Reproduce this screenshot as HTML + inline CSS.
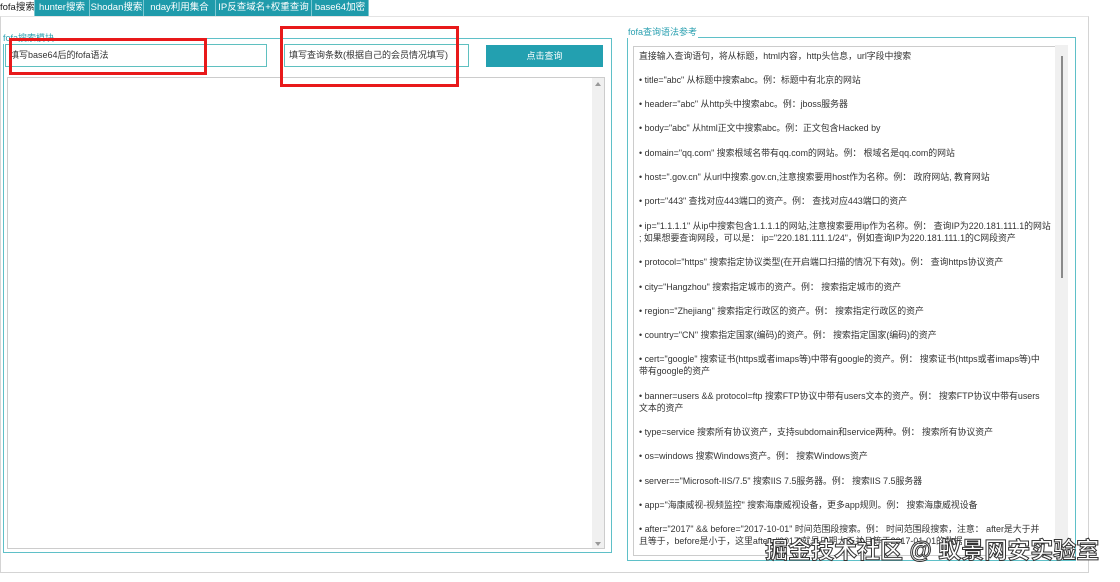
<!DOCTYPE html>
<html><head><meta charset="utf-8"><style>
*{margin:0;padding:0;box-sizing:border-box}
body{width:1120px;height:582px;background:#fff;font-family:"Liberation Sans","Noto Sans CJK SC",sans-serif;position:relative;overflow:hidden;color:#333}
.a{position:absolute}
.tab{position:absolute;top:0;height:16px;background:#1f9bab;color:#fff;font-size:9.5px;line-height:16px;text-align:center;border-right:1px solid #7cc8d2;white-space:nowrap;overflow:hidden}
.inp{position:absolute;border:1px solid #5fc0c0;background:#fff;font-size:9px;line-height:21px;padding-left:4px;color:#333;white-space:nowrap;overflow:hidden}
.p{position:absolute;left:639px;font-size:8.9px;line-height:12px;color:#333;width:415px;white-space:nowrap}
.leg{position:absolute;font-size:9px;color:#2aa0b0;background:#fff;padding:0 1px;line-height:12px}
</style></head><body>
<div class="a" style="left:0;top:16px;width:1089px;height:557px;border:1px solid #d4d4d4;border-top:1px solid #e4e4e4"></div>
<div class="tab" style="left:0;width:35px;background:#fff;color:#222;text-align:left">fofa搜索</div>
<div class="tab" style="left:35px;width:55px">hunter搜索</div>
<div class="tab" style="left:90px;width:54px">Shodan搜索</div>
<div class="tab" style="left:144px;width:72px">nday利用集合</div>
<div class="tab" style="left:216px;width:96px">IP反查域名+权重查询</div>
<div class="tab" style="left:312px;width:57px">base64加密</div>

<div class="a" style="left:3px;top:38px;width:609px;height:515px;border:1px solid #5fc0c8"></div>
<div class="leg" style="left:2px;top:32px">fofa搜索模块</div>
<div class="inp" style="left:5px;top:44px;width:262px;height:23px">填写base64后的fofa语法</div>
<div class="inp" style="left:284px;top:44px;width:185px;height:23px">填写查询条数(根据自己的会员情况填写)</div>
<div class="a" style="left:486px;top:45px;width:117px;height:22px;background:#23a0b0;color:#fff;font-size:9px;line-height:22px;text-align:center">点击查询</div>
<div class="a" style="left:7px;top:77px;width:598px;height:472px;border:1px solid #ccc;background:#fff"></div>
<div class="a" style="left:592px;top:78px;width:12px;height:470px;background:#f0f0f0"></div>
<div class="a" style="left:595px;top:82px;width:0;height:0;border:3px solid transparent;border-bottom:4px solid #999;border-top:0"></div>
<div class="a" style="left:595px;top:542px;width:0;height:0;border:3px solid transparent;border-top:4px solid #999;border-bottom:0"></div>
<div class="a" style="left:9px;top:38px;width:198px;height:37px;border:3px solid #e8191a"></div>
<div class="a" style="left:280px;top:26px;width:179px;height:61px;border:3px solid #e8191a"></div>

<div class="a" style="left:627px;top:37px;width:449px;height:524px;border:1px solid #5fc0c8"></div>
<div class="leg" style="left:627px;top:26px">fofa查询语法参考</div>
<div class="a" style="left:633px;top:46px;width:435px;height:510px;border:1px solid #ccc;background:#fff"></div>
<div class="a" style="left:1055px;top:45px;width:13px;height:510px;background:#f0f0f0"></div>
<div class="a" style="left:1061px;top:56px;width:2px;height:222px;background:#8a8a8a"></div>

<div class="p" style="top:50px">直接输入查询语句，将从标题，html内容，http头信息，url字段中搜索</div>
<div class="p" style="top:74px">• title="abc" 从标题中搜索abc。例：标题中有北京的网站</div>
<div class="p" style="top:98px">• header="abc" 从http头中搜索abc。例：jboss服务器</div>
<div class="p" style="top:122px">• body="abc" 从html正文中搜索abc。例：正文包含Hacked by</div>
<div class="p" style="top:147px">• domain="qq.com" 搜索根域名带有qq.com的网站。例： 根域名是qq.com的网站</div>
<div class="p" style="top:171px">• host=".gov.cn" 从url中搜索.gov.cn,注意搜索要用host作为名称。例： 政府网站, 教育网站</div>
<div class="p" style="top:195px">• port="443" 查找对应443端口的资产。例： 查找对应443端口的资产</div>
<div class="p" style="top:220px">• ip="1.1.1.1" 从ip中搜索包含1.1.1.1的网站,注意搜索要用ip作为名称。例： 查询IP为220.181.111.1的网站<br>; 如果想要查询网段，可以是： ip="220.181.111.1/24"，例如查询IP为220.181.111.1的C网段资产</div>
<div class="p" style="top:256px">• protocol="https" 搜索指定协议类型(在开启端口扫描的情况下有效)。例： 查询https协议资产</div>
<div class="p" style="top:281px">• city="Hangzhou" 搜索指定城市的资产。例： 搜索指定城市的资产</div>
<div class="p" style="top:305px">• region="Zhejiang" 搜索指定行政区的资产。例： 搜索指定行政区的资产</div>
<div class="p" style="top:329px">• country="CN" 搜索指定国家(编码)的资产。例： 搜索指定国家(编码)的资产</div>
<div class="p" style="top:353px">• cert="google" 搜索证书(https或者imaps等)中带有google的资产。例： 搜索证书(https或者imaps等)中<br>带有google的资产</div>
<div class="p" style="top:390px">• banner=users &amp;&amp; protocol=ftp 搜索FTP协议中带有users文本的资产。例： 搜索FTP协议中带有users<br>文本的资产</div>
<div class="p" style="top:426px">• type=service 搜索所有协议资产，支持subdomain和service两种。例： 搜索所有协议资产</div>
<div class="p" style="top:450px">• os=windows 搜索Windows资产。例： 搜索Windows资产</div>
<div class="p" style="top:475px">• server=="Microsoft-IIS/7.5" 搜索IIS 7.5服务器。例： 搜索IIS 7.5服务器</div>
<div class="p" style="top:499px">• app="海康威视-视频监控" 搜索海康威视设备，更多app规则。例： 搜索海康威视设备</div>
<div class="p" style="top:523px">• after="2017" &amp;&amp; before="2017-10-01" 时间范围段搜索。例： 时间范围段搜索，注意： after是大于并<br>且等于，before是小于，这里after="2017"就是日期大于并且等于2017-01-01的数据</div>

<div class="a" style="left:765px;top:535px;font-size:23px;line-height:30px;color:#fff;font-weight:bold;white-space:nowrap;-webkit-text-stroke:1px #333;font-family:'Liberation Sans','Noto Sans CJK SC',sans-serif">掘金技术社区 @ 蚁景网安实验室</div>
</body></html>
